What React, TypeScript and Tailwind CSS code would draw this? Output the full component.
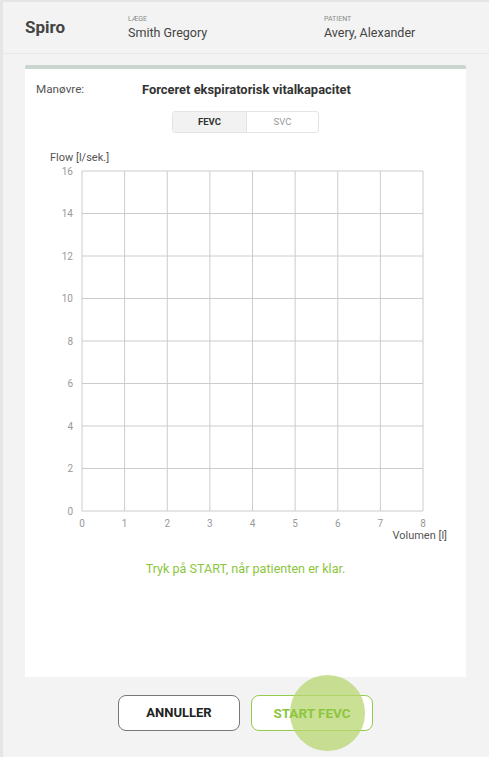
import React from "react";

const font = { fontFamily: "Roboto, 'Noto Sans', sans-serif" };

function Chart() {
  const x0 = 57, x1 = 398, y0 = 26, y1 = 366;
  const cols = Array.from({ length: 9 }, (_, i) => x0 + ((x1 - x0) * i) / 8);
  const rows = Array.from({ length: 9 }, (_, i) => y1 - ((y1 - y0) * i) / 8);
  return (
    <svg width="441" height="400" className="block" style={font}>
      <text x="25" y="16" fontSize="11" fill="#555">Flow [l/sek.]</text>
      {cols.map((x, i) => (
        <line key={"c" + i} x1={x} x2={x} y1={y0} y2={y1} stroke="#cccccc" strokeWidth="1" />
      ))}
      {rows.map((y, i) => (
        <line key={"r" + i} x1={x0} x2={x1} y1={y} y2={y} stroke="#cccccc" strokeWidth="1" />
      ))}
      {rows.map((y, i) => (
        <text key={"yl" + i} x="48" y={y + 3.5} fontSize="10" fill="#999" textAnchor="end">
          {i * 2}
        </text>
      ))}
      {cols.map((x, i) => (
        <text key={"xl" + i} x={x} y="382" fontSize="10" fill="#999" textAnchor="middle">
          {i}
        </text>
      ))}
      <text x="422" y="394" fontSize="11" fill="#555" textAnchor="end">Volumen [l]</text>
    </svg>
  );
}

export default function App() {
  return (
    <div
      className="w-[489px] h-[757px] bg-[#f2f3f2] border-l-[3px] border-t-[2px] border-[#e4e6e5] flex flex-col overflow-hidden"
      style={font}
    >
      <div className="h-[52px] border-b border-[#e6e8e7] flex items-center px-[22px] shrink-0">
        <div className="w-[103px] text-[17px] font-bold text-[#444]">Spiro</div>
        <div className="w-[196px] flex flex-col">
          <span className="text-[7px] leading-[10px] text-[#8a8a8a] uppercase">LÆGE</span>
          <span className="text-[12.5px] leading-[16px] text-[#444] mt-[1px]">Smith Gregory</span>
        </div>
        <div className="flex flex-col">
          <span className="text-[7px] leading-[10px] text-[#8a8a8a] uppercase">PATIENT</span>
          <span className="text-[12.5px] leading-[16px] text-[#444] mt-[1px]">Avery, Alexander</span>
        </div>
      </div>

      <div className="ml-[22px] mt-[11px] w-[441px] h-[612px] bg-white border-t-[4px] border-[#c9d6cf] rounded-t-[2px] flex flex-col shrink-0">
        <div className="flex items-center h-[20px] mt-[11px]">
          <span className="pl-[11px] w-[117px] text-[11.7px] text-[#555]">Manøvre:</span>
          <span className="text-[12.9px] font-bold text-[#333]">Forceret ekspiratorisk vitalkapacitet</span>
        </div>
        <div className="flex justify-center mt-[11px]">
          <div className="flex w-[147px] h-[22px] border border-[#e3e3e3] rounded-[3px] overflow-hidden text-[9.5px]">
            <div className="w-[74px] bg-[#f1f2f1] border-r border-[#e3e3e3] flex items-center justify-center font-bold text-[#333]">
              FEVC
            </div>
            <div className="flex-1 flex items-center justify-center text-[#9a9a9a]">SVC</div>
          </div>
        </div>
        <div className="mt-[12px]">
          <Chart />
        </div>
        <div className="text-center text-[12.6px] text-[#8cc63f] mt-[15px]">
          Tryk på START, når patienten er klar.
        </div>
      </div>

      <div className="flex justify-center gap-[11px] mt-[18px] pr-[1px] relative">
        <button className="w-[122px] h-[36px] rounded-[8px] border border-[#777] bg-white text-[13px] font-bold text-[#222]">
          ANNULLER
        </button>
        <button className="relative w-[122px] h-[36px] rounded-[8px] border-[1.5px] border-[#95cc4e] bg-white text-[13.5px] font-bold text-[#8cc63f]">
          <span className="absolute left-[38px] top-1/2 -translate-y-1/2 w-[75px] h-[76px] rounded-full bg-[#b8d670] opacity-75"></span>
          <span className="relative">START FEVC</span>
        </button>
      </div>
    </div>
  );
}
